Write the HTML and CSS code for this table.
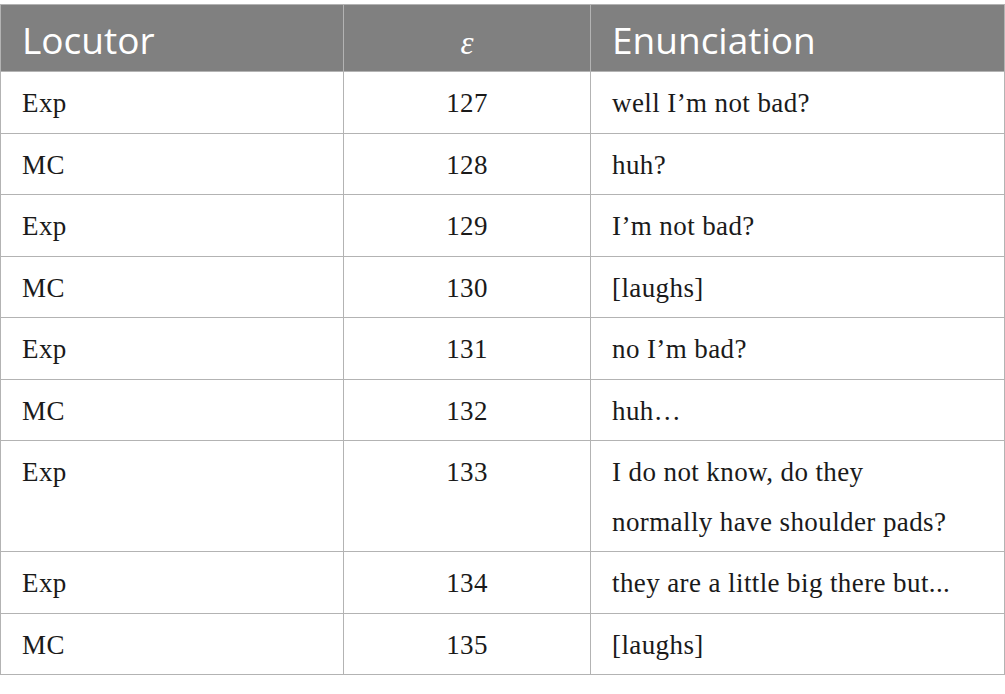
FILE: index.html
```html
<!DOCTYPE html>
<html>
<head>
<meta charset="utf-8">
<link rel="stylesheet" href="styles.css">
</head>
<body>
<div class="wrap">
<table class="tbl">
  <colgroup>
    <col class="c1"><col class="c2"><col class="c3">
  </colgroup>
  <thead>
    <tr>
      <th class="left">Locutor</th>
      <th class="mid"><span class="eps">ε</span></th>
      <th class="left">Enunciation</th>
    </tr>
  </thead>
  <tbody>
    <tr><td>Exp</td><td class="num">127</td><td class="txt">well I’m not bad?</td></tr>
    <tr><td>MC</td><td class="num">128</td><td class="txt">huh?</td></tr>
    <tr><td>Exp</td><td class="num">129</td><td class="txt">I’m not bad?</td></tr>
    <tr><td>MC</td><td class="num">130</td><td class="txt">[laughs]</td></tr>
    <tr><td>Exp</td><td class="num">131</td><td class="txt">no I’m bad?</td></tr>
    <tr><td>MC</td><td class="num">132</td><td class="txt">huh…</td></tr>
    <tr><td>Exp</td><td class="num">133</td><td class="txt">I do not know, do they normally have shoulder pads?</td></tr>
    <tr><td>Exp</td><td class="num">134</td><td class="txt">they are a little big there but...</td></tr>
    <tr><td>MC</td><td class="num">135</td><td class="txt">[laughs]</td></tr>
  </tbody>
</table>
</div>
</body>
</html>
```

FILE: styles.css
```css
html, body {
  margin: 0;
  padding: 0;
  background: #ffffff;
}
.wrap {
  padding-top: 4px;
  width: 1004px;
}
.tbl {
  border-collapse: collapse;
  width: 1004px;
  table-layout: fixed;
}
.c1 { width: 343px; }
.c2 { width: 247px; }
.c3 { width: 414px; }
.tbl th, .tbl td {
  border: 1px solid #b3b3b3;
  vertical-align: top;
}
.tbl th {
  background: #808080;
  color: #ffffff;
  font-family: "Open Sans", sans-serif;
  font-weight: 400;
  font-size: 37px;
  height: 67px;
  line-height: 48px;
  padding: 11px 21px 0 21px;
  box-sizing: border-box;
  text-align: left;
  vertical-align: top;
}
.tbl th.mid {
  text-align: center;
  padding-left: 0;
  padding-right: 0;
}
.eps {
  font-family: "Liberation Serif", serif;
  font-style: italic;
  font-size: 33px;
}
.tbl td {
  font-family: "Liberation Serif", serif;
  font-size: 27px;
  letter-spacing: 0.4px;
  color: #1a1a1a;
  line-height: 49.5px;
  padding: 7px 21px 4px 21px;
  text-align: left;
}
.tbl td.num {
  text-align: center;
  padding-left: 0;
  padding-right: 0;
}
.tbl td.txt {
  padding-right: 45px;
}
```
